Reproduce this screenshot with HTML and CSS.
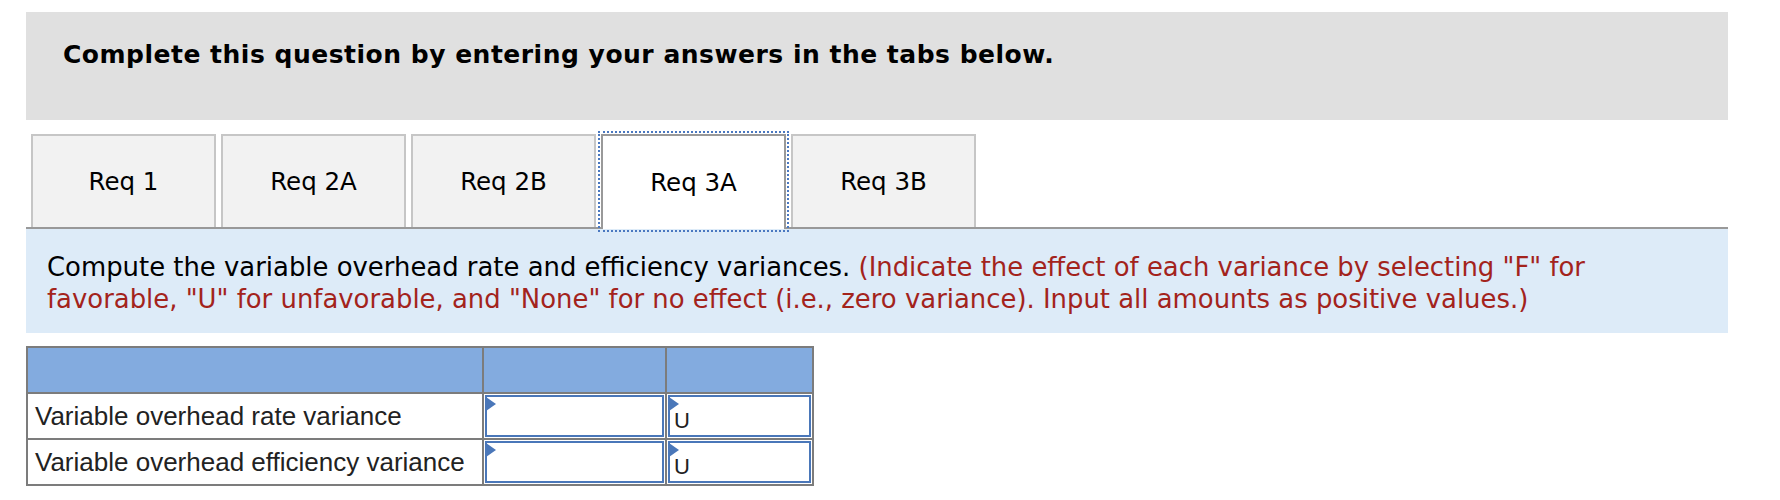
FILE: index.html
```html
<!DOCTYPE html>
<html lang="en">
<head>
<meta charset="utf-8">
<title>Req 3A</title>
<link rel="stylesheet" href="styles.css">
</head>
<body>
<div class="page">
  <div class="header">
    <h1 class="title">Complete this question by entering your answers in the tabs below.</h1>
  </div>
  <div class="tabs">
    <div class="tab">Req 1</div>
    <div class="tab">Req 2A</div>
    <div class="tab">Req 2B</div>
    <div class="tab active">Req 3A</div>
    <div class="tab">Req 3B</div>
  </div>
  <div class="instructions">
    <p class="instr-text">Compute the variable overhead rate and efficiency variances. <span class="note">(Indicate the effect of each variance by selecting "F" for favorable, "U" for unfavorable, and "None" for no effect (i.e., zero variance). Input all amounts as positive values.)</span></p>
  </div>
  <table class="grid">
    <colgroup>
      <col class="c1">
      <col class="c2">
      <col class="c3">
    </colgroup>
    <tr class="head">
      <th></th><th></th><th></th>
    </tr>
    <tr>
      <td class="label">Variable overhead rate variance</td>
      <td class="cell"><div class="input"></div></td>
      <td class="cell"><div class="input select">U</div></td>
    </tr>
    <tr>
      <td class="label">Variable overhead efficiency variance</td>
      <td class="cell"><div class="input"></div></td>
      <td class="cell"><div class="input select">U</div></td>
    </tr>
  </table>
</div>
</body>
</html>
```

FILE: styles.css
```css
html, body {
  margin: 0;
  padding: 0;
  background: #ffffff;
}

body {
  font-family: "DejaVu Sans", Verdana, sans-serif;
  color: #000;
}

.page {
  width: 1702px;
  padding: 12px 0 0 26px;
}

.header {
  background: #e0e0e0;
  height: 108px;
  box-sizing: border-box;
  padding: 28px 0 0 37px;
}

.title {
  margin: 0;
  font-family: "DejaVu Sans", Verdana, sans-serif;
  font-weight: bold;
  font-size: 25px;
  letter-spacing: 0.5px;
  line-height: 29px;
  color: #000;
}

.tabs {
  display: flex;
  align-items: flex-start;
  gap: 5px;
  margin-top: 14px;
  padding-left: 5px;
  border-bottom: 2px solid #999999;
}

.tab {
  width: 185px;
  height: 93px;
  box-sizing: border-box;
  border: 2px solid #c6c6c6;
  border-bottom: none;
  background: #f2f2f2;
  display: flex;
  align-items: center;
  justify-content: center;
  font-size: 24.5px;
  color: #000;
}

.tab.active {
  height: 95px;
  margin-bottom: -2px;
  background: #ffffff;
  border-color: #999999;
  outline: 2px dotted #4a78c0;
  outline-offset: 1px;
  position: relative;
  z-index: 1;
}

.instructions {
  background: #ddebf8;
  padding: 22px 20px 18px 21px;
}

.instr-text {
  margin: 0;
  max-width: 1600px;
  font-size: 25.9px;
  line-height: 32px;
  color: #000;
}

.note {
  color: #a3231c;
}

.grid {
  margin-top: 13px;
  border-collapse: collapse;
  table-layout: fixed;
  width: 786px;
  font-family: "Liberation Sans", Arial, sans-serif;
}

.c1 { width: 456px; }
.c2 { width: 183px; }
.c3 { width: 147px; }

.grid th,
.grid td {
  border: 2px solid #7c7c7c;
  padding: 0;
  height: 44px;
}

.head th {
  background: #83abdf;
}

.grid td.label {
  font-size: 26px;
  line-height: 30px;
  color: #222;
  padding: 0 0 0 7px;
  white-space: nowrap;
}

.grid td.cell {
  padding: 1px;
  height: 42px;
  vertical-align: top;
}

.input {
  position: relative;
  height: 42px;
  box-sizing: border-box;
  border: 2px solid #4a77b9;
  background: #fff;
}

.input::before {
  content: "";
  position: absolute;
  left: -1px;
  top: 0;
  width: 0;
  height: 0;
  border-left: 10px solid #4a77b9;
  border-top: 7px solid transparent;
  border-bottom: 7px solid transparent;
}

.select {
  font-size: 22px;
  line-height: 22px;
  color: #222;
  padding: 13px 0 0 4px;
}
```
